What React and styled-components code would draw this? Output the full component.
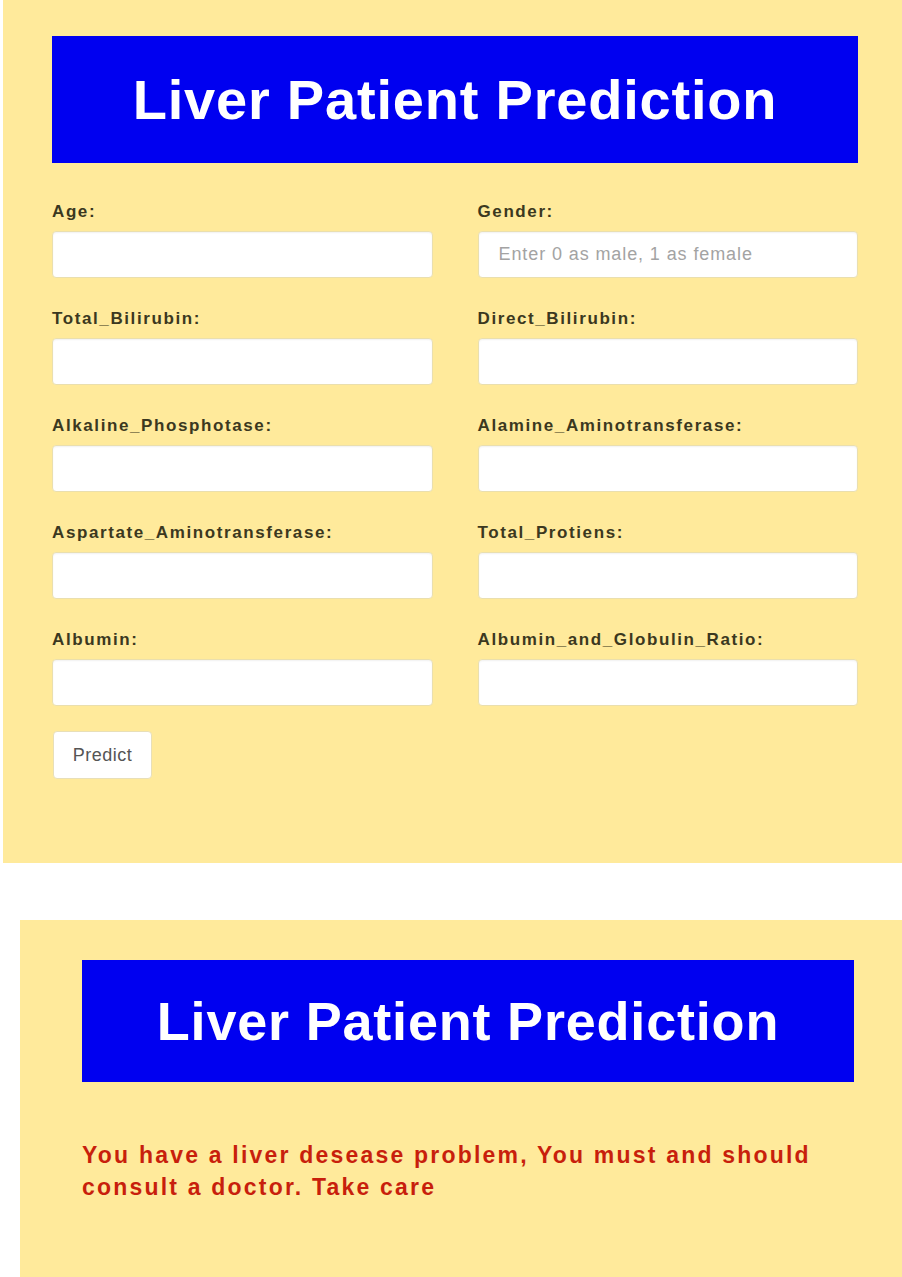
import React from "react";
import styled, { createGlobalStyle } from "styled-components";

const GlobalStyle = createGlobalStyle`
  html, body {
    margin: 0;
    padding: 0;
    background: #ffffff;
    font-family: "Liberation Sans", Arial, sans-serif;
  }
  * { box-sizing: border-box; }
`;

const fields = [
  ["Age:", ""],
  ["Gender:", "Enter 0 as male, 1 as female"],
  ["Total_Bilirubin:", ""],
  ["Direct_Bilirubin:", ""],
  ["Alkaline_Phosphotase:", ""],
  ["Alamine_Aminotransferase:", ""],
  ["Aspartate_Aminotransferase:", ""],
  ["Total_Protiens:", ""],
  ["Albumin:", ""],
  ["Albumin_and_Globulin_Ratio:", ""],
];

const App = () => {
  return (
    <>
      <GlobalStyle />
      <Page>
        <FormPanel>
          <Banner $size={56}>
            <h1>Liver Patient Prediction</h1>
          </Banner>
          <Form onSubmit={(e) => e.preventDefault()}>
            <FieldGrid>
              {fields.map(([label, hint]) => (
                <Field key={label}>
                  <Label>{label}</Label>
                  <Input type="text" placeholder={hint} />
                </Field>
              ))}
            </FieldGrid>
            <PredictBtn type="submit">Predict</PredictBtn>
          </Form>
        </FormPanel>

        <ResultPanel>
          <Banner $size={54} $height={122}>
            <h1>Liver Patient Prediction</h1>
          </Banner>
          <Result>
            You have a liver desease problem, You must and should consult a
            doctor. Take care
          </Result>
        </ResultPanel>
      </Page>
    </>
  );
};

export default App;

const Page = styled.div`
  display: flex;
  flex-direction: column;
  gap: 57px;
  overflow: hidden;
`;

const FormPanel = styled.section`
  margin-left: 3px;
  height: 863px;
  background: #ffea9b;
  padding: 36px 44px 0 49px;
`;

const ResultPanel = styled.section`
  margin-left: 20px;
  height: 357px;
  background: #ffea9b;
  padding: 40px 48px 0 62px;
`;

const Banner = styled.div`
  height: ${(p) => p.$height || 127}px;
  background: #0000f0;
  display: flex;
  align-items: center;
  justify-content: center;

  h1 {
    margin: 0;
    color: #ffffff;
    font-family: "Liberation Sans", Arial, sans-serif;
    font-weight: 700;
    font-size: ${(p) => p.$size}px;
    letter-spacing: 0.8px;
    line-height: 1;
  }
`;

const Form = styled.form`
  padding-top: 39px;
  display: flex;
  flex-direction: column;
  align-items: flex-start;
`;

const FieldGrid = styled.div`
  width: 100%;
  display: grid;
  grid-template-columns: 1fr 1fr;
  column-gap: 45px;
  row-gap: 31px;
`;

const Field = styled.div`
  display: flex;
  flex-direction: column;
  gap: 9px;
`;

const Label = styled.label`
  font-size: 17px;
  line-height: 20px;
  font-weight: 700;
  letter-spacing: 1.6px;
  color: #3b3820;
`;

const Input = styled.input`
  height: 47px;
  width: 100%;
  background: #ffffff;
  border: 1px solid #eadfae;
  border-radius: 4px;
  box-shadow: inset 0 1px 2px rgba(0, 0, 0, 0.06);
  padding: 0 20px;
  font-family: "Liberation Sans", Arial, sans-serif;
  font-size: 18px;
  letter-spacing: 0.9px;
  color: #555;
  outline: none;

  &::placeholder {
    color: #a3a3a3;
  }
`;

const PredictBtn = styled.button`
  margin-top: 25px;
  margin-left: 1px;
  width: 99px;
  height: 48px;
  background: #ffffff;
  border: 1px solid #e8dfb8;
  border-radius: 4px;
  font-family: "Liberation Sans", Arial, sans-serif;
  font-size: 18px;
  letter-spacing: 0.5px;
  color: #555555;
  cursor: pointer;
`;

const Result = styled.p`
  margin: 57px 0 0;
  font-size: 23px;
  line-height: 32px;
  font-weight: 700;
  letter-spacing: 2.2px;
  color: #c81f0c;
`;
